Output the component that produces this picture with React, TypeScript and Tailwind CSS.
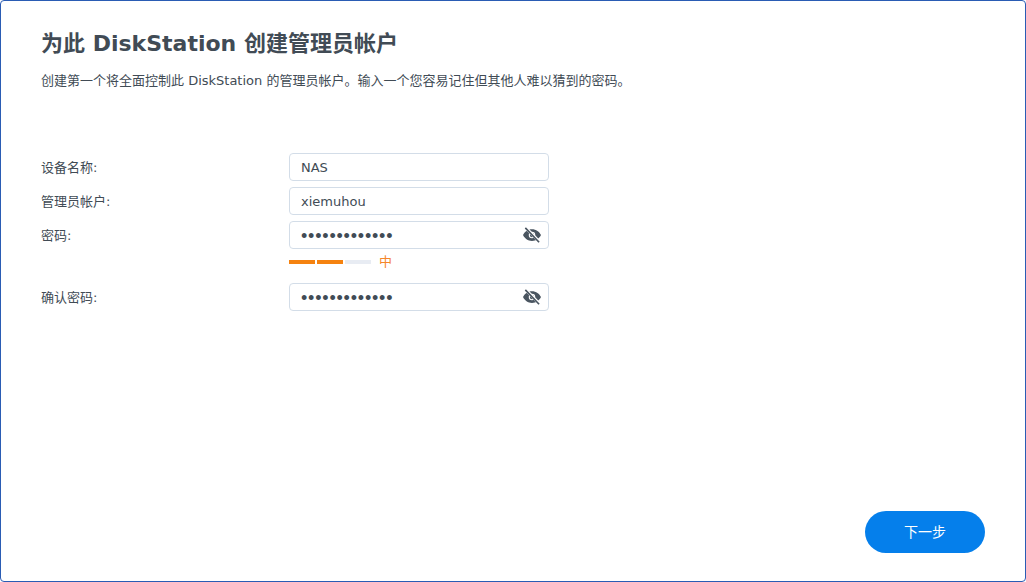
import React from "react";

const font = "[font-family:'DejaVu_Sans','Noto_Sans_CJK_SC',sans-serif]";

const EyeOff = () => (
  <svg viewBox="0 0 24 24" width="20" height="20" fill="#4a5560" aria-hidden="true">
    <path d="M12 5c-4.900 0-9 3-10.800 7.100C3 16.100 7.100 19.200 12 19.200s9-3.100 10.800-7.100C21 8 16.900 5 12 5zm0 10.900a3.900 3.900 0 1 1 0-7.800 3.900 3.900 0 0 1 0 7.800z" />
    <circle cx="12" cy="12.100" r="2.600" />
    <path d="M4.300 2.900 21.200 20.500" stroke="#ffffff" strokeWidth="3.600" />
    <path d="M4 3.500 20.500 20.700" stroke="#4a5560" strokeWidth="2" />
  </svg>
);

const Row = ({ label, children }: { label: string; children: React.ReactNode }) => (
  <div className="flex items-center h-7">
    <label className="w-[248px] pt-[2px] text-[13px] text-[#414b55]">{label}</label>
    {children}
  </div>
);

const TextBox = ({ value }: { value: string }) => (
  <div className="w-[260px] h-7 flex items-center pl-[11px] pt-[2px] border border-[#d3dde8] rounded text-[13px] text-[#414b55]">
    {value}
  </div>
);

const PasswordBox = () => (
  <div className="w-[260px] h-7 flex items-center justify-between pl-[11px] pr-[6px] border border-[#d3dde8] rounded text-[#414b55]">
    <span className="pt-[2px] [font-family:'Liberation_Sans',sans-serif] text-[18px] leading-none tracking-[0.8px]">•••••••••••••</span>
    <EyeOff />
  </div>
);

export default function App() {
  return (
    <div className={`${font} w-[1026px] h-[582px] bg-white border border-[#2a5cb4] rounded flex flex-col overflow-hidden`}>
      <div className="pl-10 pt-[26px] flex-1">
        <h1 className="text-[22px] leading-[34px] font-bold text-[#414b55]">为此 DiskStation 创建管理员帐户</h1>
        <p className="mt-[10px] text-[13px] leading-[20px] text-[#414b55]">
          创建第一个将全面控制此 DiskStation 的管理员帐户。输入一个您容易记住但其他人难以猜到的密码。
        </p>
        <div className="mt-[62px] flex flex-col gap-[6px]">
          <Row label="设备名称:"><TextBox value="NAS" /></Row>
          <Row label="管理员帐户:"><TextBox value="xiemuhou" /></Row>
          <Row label="密码:"><PasswordBox /></Row>
        </div>
        <div className="ml-[248px] h-[28px] flex items-center gap-[2px]">
          <div className="w-[26px] h-[4px] mb-[3px] bg-[#f5820f]" />
          <div className="w-[26px] h-[4px] mb-[3px] bg-[#f5820f]" />
          <div className="w-[26px] h-[4px] mb-[3px] bg-[#e8ecf3]" />
          <span className="ml-[6px] pb-[2px] text-[13px] text-[#f5862a]">中</span>
        </div>
        <div className="mt-[6px]">
          <Row label="确认密码:"><PasswordBox /></Row>
        </div>
      </div>
      <div className="flex justify-end pr-10 pb-7">
        <button className="w-[120px] h-[42px] rounded-full bg-[#057feb] text-white text-[14px]">下一步</button>
      </div>
    </div>
  );
}
